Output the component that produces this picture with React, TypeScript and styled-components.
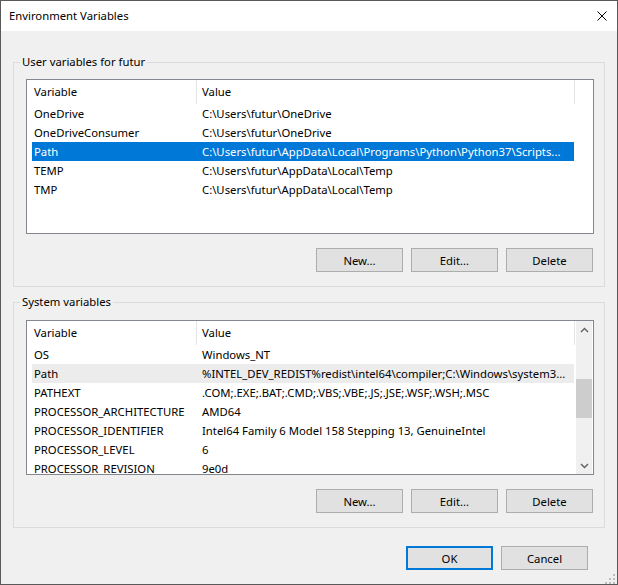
import React from "react";
import styled, {createGlobalStyle} from "styled-components";

const GlobalStyle = createGlobalStyle`
  html, body {
    margin: 0;
    padding: 0;
    background: #f0f0f0;
  }

  body {
    font-family: "Noto Sans", "Liberation Sans", sans-serif;
    font-size: 11.3px;
    color: #000;
  }
`;

const Window = styled.div`
  position: relative;
  width: 618px;
  height: 585px;
  box-sizing: border-box;
  border: 1px solid #595959;
  display: flex;
  flex-direction: column;
  background: #f0f0f0;
`;

const TitleBar = styled.div`
  height: 30px;
  flex: none;
  background: #fff;
  display: flex;
  align-items: center;
  justify-content: space-between;
  padding: 0 10px 0 8px;
`;

const Title = styled.span`
  font-size: 11.3px;
  line-height: 30px;
`;

const Body = styled.div`
  flex: 1;
  display: flex;
  flex-direction: column;
  padding: 23px 12px 0 12px;
`;

const Group = styled.fieldset<{ $gapTop?: number }>`
  margin: ${p => p.$gapTop ?? 0}px 0 0 0;
  min-width: 0;
  border: 1px solid #dcdcdc;
  padding: 0 10px 14px 12px;
`;

const Legend = styled.legend`
  margin-left: -6px;
  padding: 0 2px;
  height: 16px;
  line-height: 16px;
`;

const GroupInner = styled.div<{ $padTop: number }>`
  padding-top: ${p => p.$padTop}px;
`;

const ListBox = styled.div`
  height: 155px;
  box-sizing: border-box;
  border: 1px solid #828790;
  background: #fff;
  display: flex;
  overflow: hidden;
`;

const ListContent = styled.div`
  flex: 1;
  padding-left: 5px;
  overflow: hidden;
`;

const HeaderRow = styled.div`
  display: flex;
  height: 24px;
`;

const HeaderCell = styled.div<{ $width: number; $pad: number }>`
  box-sizing: border-box;
  width: ${p => p.$width}px;
  flex: none;
  padding-left: ${p => p.$pad}px;
  border-right: 1px solid #e5e5e5;
  line-height: 24px;
  white-space: nowrap;
`;

const Row = styled.div<{ $state?: "selected" | "hover" }>`
  display: flex;
  height: 19px;
  width: 542px;
  background: ${p => p.$state === "selected" ? "#0078d7" : p.$state === "hover" ? "#ececec" : "transparent"};
  color: ${p => p.$state === "selected" ? "#fff" : "#000"};
`;

const Cell = styled.div<{ $width: number; $pad: number }>`
  box-sizing: border-box;
  width: ${p => p.$width}px;
  flex: none;
  padding-left: ${p => p.$pad}px;
  line-height: 19px;
  white-space: nowrap;
  overflow: hidden;
  text-overflow: ellipsis;
`;

const ScrollBar = styled.div`
  width: 16px;
  margin-right: 1px;
  flex: none;
  background: #f0f0f0;
  display: flex;
  flex-direction: column;
`;

const ScrollArrow = styled.div`
  height: 17px;
  flex: none;
  display: flex;
  align-items: center;
  justify-content: center;
`;

const ScrollTrack = styled.div`
  flex: 1;
  padding-top: 41px;
`;

const ScrollThumb = styled.div`
  height: 39px;
  background: #cdcdcd;
`;

const ButtonRow = styled.div<{ $top: number; $right: number }>`
  display: flex;
  justify-content: flex-end;
  gap: 8px;
  margin-top: ${p => p.$top}px;
  padding-right: ${p => p.$right}px;
`;

const Button = styled.button<{ $default?: boolean }>`
  width: 87px;
  height: 24px;
  box-sizing: border-box;
  margin: 0;
  padding: 0;
  background: #e1e1e1;
  border: ${p => p.$default ? "2px solid #0078d7" : "1px solid #adadad"};
  font-family: inherit;
  font-size: 11.3px;
  color: #000;
`;

const Grip = styled.svg`
  position: absolute;
  right: 0;
  bottom: 0;
`;

interface Variable {
    name: string
    value: string
    state?: "selected" | "hover"
}

const userVariables: Variable[] = [
    {name: "OneDrive", value: "C:\\Users\\futur\\OneDrive"},
    {name: "OneDriveConsumer", value: "C:\\Users\\futur\\OneDrive"},
    {name: "Path", value: "C:\\Users\\futur\\AppData\\Local\\Programs\\Python\\Python37\\Scripts...", state: "selected"},
    {name: "TEMP", value: "C:\\Users\\futur\\AppData\\Local\\Temp"},
    {name: "TMP", value: "C:\\Users\\futur\\AppData\\Local\\Temp"},
];

// the list is scrolled: the last visible row is cut by the list's bottom edge
const systemVariables: Variable[] = [
    {name: "OS", value: "Windows_NT"},
    {name: "Path", value: "%INTEL_DEV_REDIST%redist\\intel64\\compiler;C:\\Windows\\system3...", state: "hover"},
    {name: "PATHEXT", value: ".COM;.EXE;.BAT;.CMD;.VBS;.VBE;.JS;.JSE;.WSF;.WSH;.MSC"},
    {name: "PROCESSOR_ARCHITECTURE", value: "AMD64"},
    {name: "PROCESSOR_IDENTIFIER", value: "Intel64 Family 6 Model 158 Stepping 13, GenuineIntel"},
    {name: "PROCESSOR_LEVEL", value: "6"},
    {name: "PROCESSOR_REVISION", value: "9e0d"},
];

function Chevron({up}: { up: boolean }) {
    return (
        <svg width="9" height="6" viewBox="0 0 9 6">
            <path d={up ? "M1 5 L4.5 1.5 L8 5" : "M1 1 L4.5 4.5 L8 1"} fill="none" stroke="#606060" strokeWidth="1.4"/>
        </svg>
    );
}

function VariableList({rows, scroll}: { rows: Variable[], scroll?: boolean }) {
    return (
        <ListBox>
            <ListContent>
                <HeaderRow>
                    <HeaderCell $width={165} $pad={2}>Variable</HeaderCell>
                    <HeaderCell $width={378} $pad={5}>Value</HeaderCell>
                </HeaderRow>
                {rows.map(row => (
                    <Row key={row.name} $state={row.state}>
                        <Cell $width={165} $pad={2}>{row.name}</Cell>
                        <Cell $width={377} $pad={5}>{row.value}</Cell>
                    </Row>
                ))}
            </ListContent>
            {scroll && (
                <ScrollBar>
                    <ScrollArrow><Chevron up/></ScrollArrow>
                    <ScrollTrack><ScrollThumb/></ScrollTrack>
                    <ScrollArrow><Chevron up={false}/></ScrollArrow>
                </ScrollBar>
            )}
        </ListBox>
    );
}

function ListButtons() {
    return (
        <ButtonRow $top={14} $right={1}>
            <Button>New...</Button>
            <Button>Edit...</Button>
            <Button>Delete</Button>
        </ButtonRow>
    );
}

export default function App() {
    return (
        <>
            <GlobalStyle/>
            <Window>
                <TitleBar>
                    <Title>Environment Variables</Title>
                    <svg width="10" height="10" viewBox="0 0 10 10">
                        <path d="M0.5 0.5 L9.5 9.5 M9.5 0.5 L0.5 9.5" stroke="#000" strokeWidth="1"/>
                    </svg>
                </TitleBar>
                <Body>
                    <Group>
                        <Legend>User variables for futur</Legend>
                        <GroupInner $padTop={9}>
                            <VariableList rows={userVariables}/>
                            <ListButtons/>
                        </GroupInner>
                    </Group>
                    <Group $gapTop={7}>
                        <Legend>System variables</Legend>
                        <GroupInner $padTop={10}>
                            <VariableList rows={systemVariables} scroll/>
                            <ListButtons/>
                        </GroupInner>
                    </Group>
                    <ButtonRow $top={18} $right={17}>
                        <Button $default>OK</Button>
                        <Button>Cancel</Button>
                    </ButtonRow>
                </Body>
                <Grip width="12" height="12" viewBox="0 0 12 12">
                    <rect x="8" y="2" width="2" height="2" fill="#bcbcbc"/>
                    <rect x="4" y="6" width="2" height="2" fill="#bcbcbc"/>
                    <rect x="8" y="6" width="2" height="2" fill="#bcbcbc"/>
                    <rect x="0" y="10" width="2" height="2" fill="#bcbcbc"/>
                    <rect x="4" y="10" width="2" height="2" fill="#bcbcbc"/>
                    <rect x="8" y="10" width="2" height="2" fill="#bcbcbc"/>
                </Grip>
            </Window>
        </>
    );
}
